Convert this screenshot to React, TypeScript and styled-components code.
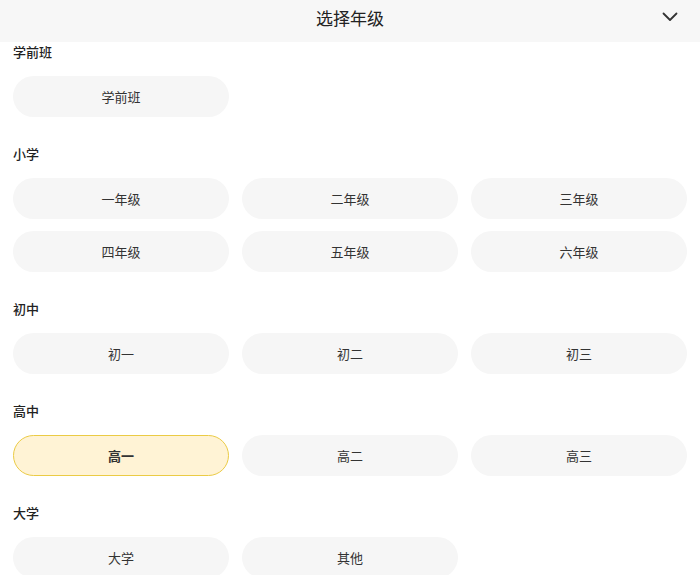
import React, { useState } from 'react';
import styled, { createGlobalStyle } from 'styled-components';

const GlobalStyle = createGlobalStyle`
  html, body {
    margin: 0;
    padding: 0;
    background: #ffffff;
    font-family: "Noto Sans CJK SC", "Noto Sans", sans-serif;
    color: #333333;
  }
  * { box-sizing: border-box; }
`;

interface Section {
  title: string;
  grades: string[];
}

const sections: Section[] = [
  { title: '学前班', grades: ['学前班'] },
  { title: '小学', grades: ['一年级', '二年级', '三年级', '四年级', '五年级', '六年级'] },
  { title: '初中', grades: ['初一', '初二', '初三'] },
  { title: '高中', grades: ['高一', '高二', '高三'] },
  { title: '大学', grades: ['大学', '其他'] },
];

const Page = styled.div`
  width: 700px;
  height: 575px;
  overflow: hidden;
  display: flex;
  flex-direction: column;
`;

const Header = styled.div`
  height: 42px;
  flex-shrink: 0;
  background: #f7f7f7;
  display: flex;
  align-items: center;
  justify-content: center;
  position: relative;
`;

const Title = styled.h1`
  margin: -6px 0 0;
  font-size: 17px;
  font-weight: 400;
  color: #222222;
  line-height: 20px;
`;

const CloseButton = styled.button`
  position: absolute;
  right: 20px;
  top: 8px;
  width: 20px;
  height: 18px;
  padding: 0;
  border: none;
  background: none;
  display: flex;
  align-items: center;
  justify-content: center;
  cursor: pointer;
  color: #333333;
`;

const Content = styled.div`
  padding: 0 13px;
  display: flex;
  flex-direction: column;
  gap: 27px;
`;

const Group = styled.section`
  display: flex;
  flex-direction: column;
  gap: 14px;
`;

const GroupTitle = styled.div`
  font-size: 13px;
  line-height: 20px;
  font-weight: 500;
  color: #222222;
`;

const Grid = styled.div`
  display: grid;
  grid-template-columns: repeat(3, 1fr);
  column-gap: 13px;
  row-gap: 12px;
`;

const GradeButton = styled.button<{ $active: boolean }>`
  height: 41px;
  border-radius: 21px;
  border: 1px solid ${p => (p.$active ? '#ebcb45' : 'transparent')};
  background: ${p => (p.$active ? '#fff3d5' : '#f6f6f6')};
  font-family: inherit;
  font-size: 13px;
  font-weight: ${p => (p.$active ? 600 : 400)};
  color: #333333;
  cursor: pointer;
  padding: 0;
`;

export default function App() {
  const [selected, setSelected] = useState('高一');

  return (
    <Page>
      <GlobalStyle />
      <Header>
        <Title>选择年级</Title>
        <CloseButton aria-label="收起">
          <svg width="16" height="10" viewBox="0 0 16 10" fill="none">
            <path d="M1.5 1.5 L8 8 L14.5 1.5" stroke="currentColor" strokeWidth="1.8" strokeLinecap="round" strokeLinejoin="round" />
          </svg>
        </CloseButton>
      </Header>
      <Content>
        {sections.map(s => (
          <Group key={s.title}>
            <GroupTitle>{s.title}</GroupTitle>
            <Grid>
              {s.grades.map(g => (
                <GradeButton key={g} $active={selected === g} onClick={() => setSelected(g)}>
                  {g}
                </GradeButton>
              ))}
            </Grid>
          </Group>
        ))}
      </Content>
    </Page>
  );
}
